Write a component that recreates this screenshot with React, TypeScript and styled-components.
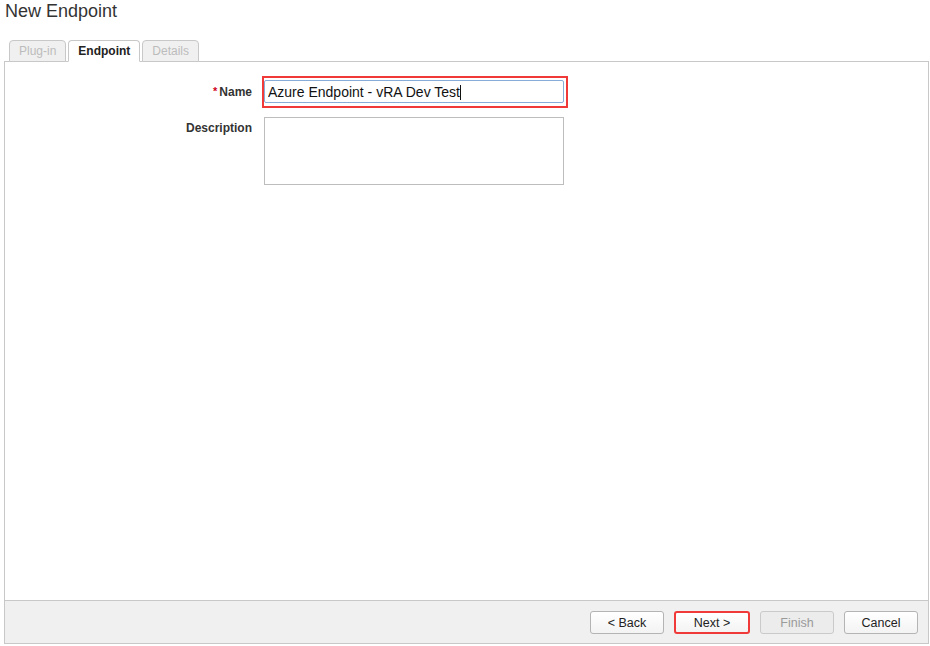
import styled, { createGlobalStyle } from 'styled-components';

const GlobalStyle = createGlobalStyle`
  html, body {
    margin: 0;
    padding: 0;
    background: #fff;
    font-family: "Liberation Sans", Arial, Helvetica, sans-serif;
    color: #333;
  }
`;

const Page = styled.div`
  width: 930px;
  height: 646px;
  display: flex;
  flex-direction: column;
  box-sizing: border-box;
  padding: 0 2px 2px 4px;
`;

const Title = styled.h1`
  margin: 0;
  height: 40px;
  padding: 1px 0 0 1px;
  box-sizing: border-box;
  font-size: 18px;
  font-weight: normal;
  line-height: 20px;
  color: #333;
`;

const TabBar = styled.div`
  display: flex;
  gap: 2px;
  padding-left: 5px;
  height: 22px;
  position: relative;
  z-index: 1;
`;

const Tab = styled.div<{ $active?: boolean }>`
  height: 22px;
  box-sizing: border-box;
  padding: 0 9px;
  display: flex;
  align-items: center;
  border: 1px solid #c8c8c8;
  border-bottom: ${({ $active }) => ($active ? '1px solid #fff' : '1px solid #c8c8c8')};
  border-radius: 4px 4px 0 0;
  background: ${({ $active }) => ($active ? '#fff' : '#f0f0f0')};
  color: ${({ $active }) => ($active ? '#222' : '#bcbcbc')};
  font-size: 12px;
  font-weight: ${({ $active }) => ($active ? 'bold' : 'normal')};
`;

const Panel = styled.div`
  flex: 1;
  display: flex;
  flex-direction: column;
  margin-top: -1px;
  border: 1px solid #c8c8c8;
  width: 925px;
  box-sizing: border-box;
`;

const Body = styled.div`
  flex: 1;
  display: flex;
  flex-direction: column;
  gap: 9px;
  padding-top: 14px;
`;

const Row = styled.div<{ $top?: boolean }>`
  display: flex;
  align-items: ${({ $top }) => ($top ? 'flex-start' : 'center')};
  gap: 10px;
`;

const Label = styled.label<{ $pad?: number }>`
  width: 247px;
  text-align: right;
  font-size: 12px;
  font-weight: bold;
  color: #333;
  padding-top: ${({ $pad }) => ($pad ? `${$pad}px` : '0')};
`;

const Required = styled.span`
  color: #d0021b;
  font-size: 11px;
  margin-right: 2px;
  vertical-align: top;
`;

const Highlight = styled.div`
  position: relative;
  border: 2px solid #f03a3a;
  padding: 2px 2px 3px 0;
  display: flex;
`;

const Caret = styled.span`
  position: absolute;
  left: 196px;
  top: 7px;
  width: 1px;
  height: 15px;
  background: #111;
`;

const TextInput = styled.input`
  width: 300px;
  height: 23px;
  box-sizing: border-box;
  border: 1px solid #88acd8;
  border-radius: 2px;
  padding: 0 3px;
  font-family: "Liberation Sans", Arial, Helvetica, sans-serif;
  font-size: 14px;
  color: #111;
  outline: none;
`;

const TextArea = styled.textarea`
  width: 300px;
  height: 68px;
  box-sizing: border-box;
  border: 1px solid #bdbdbd;
  margin: 0 0 0 2px;
  resize: none;
  outline: none;
  font-family: "Liberation Sans", Arial, Helvetica, sans-serif;
`;

const Footer = styled.div`
  height: 43px;
  box-sizing: border-box;
  border-top: 1px solid #c8c8c8;
  background: #f0f0f0;
  display: flex;
  justify-content: flex-end;
  align-items: flex-start;
  gap: 10px;
  padding: 10px 10px 0 0;
`;

const Button = styled.button<{ $highlight?: boolean }>`
  height: 23px;
  width: ${({ $highlight }) => ($highlight ? '76px' : '74px')};
  box-sizing: border-box;
  padding: 0;
  border: ${({ $highlight }) => ($highlight ? '2px solid #f03a3a' : '1px solid #b4b4b4')};
  border-radius: 3px;
  background: linear-gradient(#ffffff, #f3f3f3);
  font-family: "Liberation Sans", Arial, Helvetica, sans-serif;
  font-size: 12.5px;
  color: #222;
  cursor: pointer;

  &:disabled {
    background: #ececec;
    border-color: #cacaca;
    color: #9a9a9a;
    cursor: default;
  }
`;

export default function App() {
  return (
    <>
      <GlobalStyle />
      <Page>
        <Title>New Endpoint</Title>
        <TabBar>
          <Tab>Plug-in</Tab>
          <Tab $active>Endpoint</Tab>
          <Tab>Details</Tab>
        </TabBar>
        <Panel>
          <Body>
            <Row>
              <Label>
                <Required>*</Required>Name
              </Label>
              <Highlight>
                <TextInput readOnly value="Azure Endpoint - vRA Dev Test" />
                <Caret />
              </Highlight>
            </Row>
            <Row $top>
              <Label $pad={4}>Description</Label>
              <TextArea readOnly />
            </Row>
          </Body>
          <Footer>
            <Button>&lt; Back</Button>
            <Button $highlight>Next &gt;</Button>
            <Button disabled>Finish</Button>
            <Button>Cancel</Button>
          </Footer>
        </Panel>
      </Page>
    </>
  );
}
